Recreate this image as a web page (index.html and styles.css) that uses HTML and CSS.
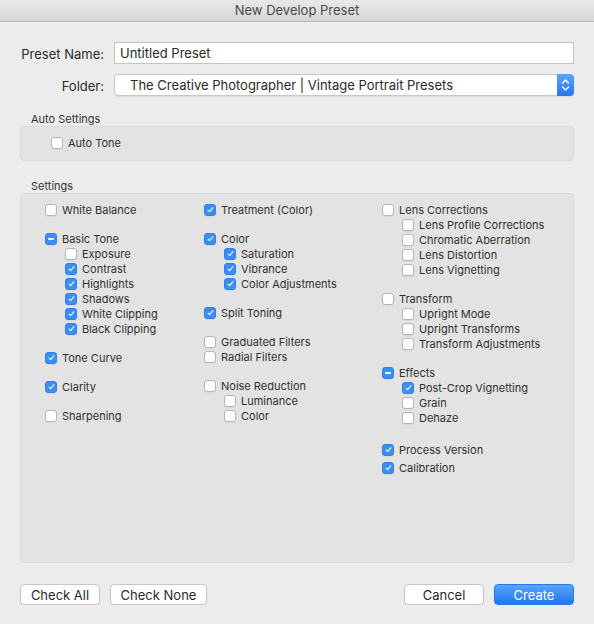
FILE: index.html
```html
<!DOCTYPE html>
<html lang="en">
<head>
  <meta charset="utf-8">
  <title>New Develop Preset</title>
  <link rel="stylesheet" href="styles.css">
</head>
<body>
  <div class="titlebar">New Develop Preset</div>
  <div class="dialog">
    <div class="field">
      <span class="field-label">Preset Name:</span>
      <div class="text-input">Untitled Preset</div>
    </div>
    <div class="field field-folder">
      <span class="field-label">Folder:</span>
      <div class="select">
        <span class="select-value">The Creative Photographer | Vintage Portrait Presets</span>
        <span class="stepper">
          <svg width="9" height="14" viewBox="0 0 9 14">
            <path d="M1.5 5 L4.5 2 L7.5 5 M1.5 9 L4.5 12 L7.5 9" fill="none" stroke="#fff" stroke-width="1.4" stroke-linecap="round" stroke-linejoin="round"/>
          </svg>
        </span>
      </div>
    </div>

    <p class="group-title">Auto Settings</p>
    <div class="panel panel-auto">
      <div class="item"><span class="box"></span>Auto Tone</div>
    </div>

    <p class="group-title group-title-settings">Settings</p>
    <div class="panel panel-settings">
      <div class="column">
        <div class="group">
          <div class="item"><span class="box"></span>White Balance</div>
        </div>
        <div class="group">
          <div class="item"><span class="box mixed"></span>Basic Tone</div>
          <div class="item sub"><span class="box"></span>Exposure</div>
          <div class="item sub"><span class="box checked"></span>Contrast</div>
          <div class="item sub"><span class="box checked"></span>Highlights</div>
          <div class="item sub"><span class="box checked"></span>Shadows</div>
          <div class="item sub"><span class="box checked"></span>White Clipping</div>
          <div class="item sub"><span class="box checked"></span>Black Clipping</div>
        </div>
        <div class="group">
          <div class="item"><span class="box checked"></span>Tone Curve</div>
        </div>
        <div class="group">
          <div class="item"><span class="box checked"></span>Clarity</div>
        </div>
        <div class="group">
          <div class="item"><span class="box"></span>Sharpening</div>
        </div>
      </div>

      <div class="column">
        <div class="group">
          <div class="item"><span class="box checked"></span>Treatment (Color)</div>
        </div>
        <div class="group">
          <div class="item"><span class="box checked"></span>Color</div>
          <div class="item sub"><span class="box checked"></span>Saturation</div>
          <div class="item sub"><span class="box checked"></span>Vibrance</div>
          <div class="item sub"><span class="box checked"></span>Color Adjustments</div>
        </div>
        <div class="group">
          <div class="item"><span class="box checked"></span>Split Toning</div>
        </div>
        <div class="group">
          <div class="item"><span class="box"></span>Graduated Filters</div>
          <div class="item"><span class="box"></span>Radial Filters</div>
        </div>
        <div class="group">
          <div class="item"><span class="box"></span>Noise Reduction</div>
          <div class="item sub"><span class="box"></span>Luminance</div>
          <div class="item sub"><span class="box"></span>Color</div>
        </div>
      </div>

      <div class="column">
        <div class="group">
          <div class="item"><span class="box"></span>Lens Corrections</div>
          <div class="item sub"><span class="box"></span>Lens Profile Corrections</div>
          <div class="item sub"><span class="box"></span>Chromatic Aberration</div>
          <div class="item sub"><span class="box"></span>Lens Distortion</div>
          <div class="item sub"><span class="box"></span>Lens Vignetting</div>
        </div>
        <div class="group">
          <div class="item"><span class="box"></span>Transform</div>
          <div class="item sub"><span class="box"></span>Upright Mode</div>
          <div class="item sub"><span class="box"></span>Upright Transforms</div>
          <div class="item sub"><span class="box"></span>Transform Adjustments</div>
        </div>
        <div class="group">
          <div class="item"><span class="box mixed"></span>Effects</div>
          <div class="item sub"><span class="box checked"></span>Post-Crop Vignetting</div>
          <div class="item sub"><span class="box"></span>Grain</div>
          <div class="item sub"><span class="box"></span>Dehaze</div>
        </div>
        <div class="group group-process">
          <div class="item"><span class="box checked"></span>Process Version</div>
        </div>
        <div class="group group-calibration">
          <div class="item"><span class="box checked"></span>Calibration</div>
        </div>
      </div>
    </div>

    <div class="actions">
      <button class="button" type="button">Check All</button>
      <button class="button button-none" type="button">Check None</button>
      <button class="button button-cancel" type="button">Cancel</button>
      <button class="button button-blue" type="button">Create</button>
    </div>
  </div>
</body>
</html>
```

FILE: styles.css
```css
*, *::before, *::after {
  margin: 0;
  padding: 0;
  box-sizing: border-box;
}

body {
  background-color: #ECECEC;
  color: #2A2A2A;
  font-family: "Inter", "Liberation Sans", sans-serif;
  font-size: 13px;
}

.titlebar {
  height: 22px;
  line-height: 21px;
  text-align: center;
  color: #4A4A4A;
  background: linear-gradient(#E9E8E9, #D7D6D7);
  border-bottom: 1px solid #B9B9B9;
}

.dialog {
  padding: 0 20px;
}

.field {
  display: flex;
  align-items: center;
  margin-top: 20px;
}

.field-folder {
  margin-top: 10px;
}

.field-label {
  width: 84px;
  margin-right: 10px;
  padding-top: 1px;
  text-align: right;
}

.text-input {
  flex: 1;
  height: 22px;
  line-height: 21px;
  padding-left: 5px;
  background-color: #FFFFFF;
  border: 1px solid #C4C4C4;
}

.select {
  flex: 1;
  display: flex;
  height: 22px;
  background-color: #FFFFFF;
  border: 1px solid #C8C8C8;
  border-radius: 4px;
  box-shadow: 0 1px 1px rgba(0, 0, 0, 0.08);
}

.select-value {
  flex: 1;
  line-height: 20px;
  padding-left: 15px;
}

.stepper {
  width: 17px;
  margin: -1px -1px -1px 0;
  display: flex;
  align-items: center;
  justify-content: center;
  background: linear-gradient(#5AA5FB, #2576F2);
  border-radius: 0 4px 4px 0;
}

.group-title {
  margin-top: 17px;
  padding-left: 11px;
  font-size: 11px;
  line-height: 13px;
  color: #333333;
}

.group-title-settings {
  margin-top: 19px;
}

.panel {
  background-color: #E3E3E3;
  border: 1px solid #DADADA;
  border-radius: 4px;
}

.panel-auto {
  height: 35px;
  display: flex;
  align-items: center;
  padding: 0 0 2px 30px;
}

.panel-settings {
  height: 370px;
  display: grid;
  grid-template-columns: 159px 178px 1fr;
  padding: 8px 0 0 24px;
}

.group + .group {
  margin-top: 14px;
}

.group-process {
  margin-top: 17px !important;
}

.group-calibration {
  margin-top: 3px !important;
}

.item {
  display: flex;
  align-items: center;
  height: 15px;
  font-size: 11px;
  color: #303030;
}

.item.sub {
  padding-left: 20px;
}

.box {
  position: relative;
  width: 12px;
  height: 12px;
  margin-right: 5px;
  background-color: #FFFFFF;
  border: 1px solid #B5B5B5;
  border-radius: 3px;
  box-shadow: 0 1px 1px rgba(0, 0, 0, 0.05);
}

.box.checked, .box.mixed {
  background-color: #3B8EF5;
  border-color: #2F80EC;
}

.box.checked::after {
  content: '';
  position: absolute;
  left: 3.5px;
  top: 1px;
  width: 3px;
  height: 6px;
  border-right: 1.6px solid #FFFFFF;
  border-bottom: 1.6px solid #FFFFFF;
  transform: rotate(40deg);
}

.box.mixed::after {
  content: '';
  position: absolute;
  left: 2px;
  top: 4px;
  width: 6px;
  height: 2px;
  background-color: #FFFFFF;
  border-radius: 1px;
}

.actions {
  display: flex;
  margin-top: 21px;
}

.button {
  width: 80px;
  height: 21px;
  font-family: inherit;
  font-size: 13px;
  color: #2A2A2A;
  background-color: #FFFFFF;
  border: 1px solid #C6C6C6;
  border-radius: 4px;
  box-shadow: 0 1px 1px rgba(0, 0, 0, 0.08);
}

.button-none {
  width: 97px;
  margin-left: 10px;
}

.button-cancel {
  margin-left: auto;
}

.button-blue {
  margin-left: 10px;
  color: #FFFFFF;
  background: linear-gradient(#5AA5FB, #2274F2);
  border-color: #2A78EC;
}
```
